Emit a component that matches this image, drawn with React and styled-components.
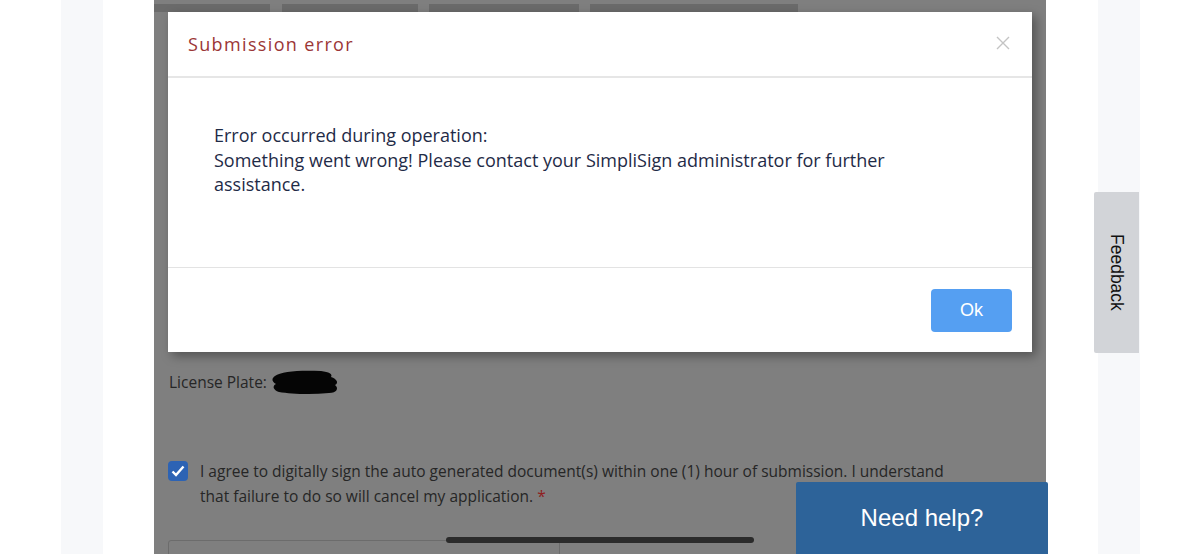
import styled, { createGlobalStyle } from "styled-components";

const Global = createGlobalStyle`
  html, body {
    margin: 0;
    padding: 0;
    height: 554px;
    overflow: hidden;
    background: #ffffff;
  }
  #root {
    height: 554px;
  }
`;

const Page = styled.div`
  position: relative;
  display: flex;
  height: 554px;
  width: 1200px;
  background: #ffffff;
  font-family: "Open Sans", "Liberation Sans", sans-serif;
`;

const Gutter = styled.div`
  width: ${(p) => p.w}px;
  flex: none;
  background: ${(p) => (p.tint ? "#f7f8fa" : "#ffffff")};
`;

const Column = styled.div`
  width: 892px;
  flex: none;
  background: #7f7f7f;
  display: flex;
  flex-direction: column;
  overflow: hidden;
  & > * {
    flex: none;
  }
`;

const TabRow = styled.div`
  display: flex;
  padding-top: 4px;
  height: 8px;
`;

const Tab = styled.div`
  width: ${(p) => p.w}px;
  margin-right: ${(p) => p.gap || 0}px;
  background: #6b6b6b;
`;

const Modal = styled.div`
  margin: 0 14px;
  height: 340px;
  background: #ffffff;
  display: flex;
  flex-direction: column;
  box-shadow: 4px 4px 10px rgba(0, 0, 0, 0.35);
`;

const ModalHeader = styled.div`
  box-sizing: border-box;
  height: 66px;
  display: flex;
  align-items: center;
  justify-content: space-between;
  padding: 0 22px 0 20px;
  border-bottom: 2px solid #e6e6e6;
`;

const Title = styled.h4`
  margin: 0;
  font-size: 18px;
  font-weight: 400;
  letter-spacing: 1.35px;
  color: #9b3636;
`;

const Close = styled.button`
  border: 0;
  background: none;
  padding: 0;
  width: 14px;
  height: 14px;
  display: flex;
  margin-top: -2px;
`;

const ModalBody = styled.div`
  box-sizing: border-box;
  height: 190px;
  padding: 45px 90px 0 46px;
  border-bottom: 1px solid #e3e3e3;
  font-size: 18px;
  line-height: 24.5px;
  color: #1f2b47;
`;

const ModalFooter = styled.div`
  flex: 1;
  display: flex;
  align-items: flex-start;
  justify-content: flex-end;
  padding: 21px 20px 0;
`;

const OkButton = styled.button`
  width: 81px;
  height: 43px;
  border: 0;
  border-radius: 4px;
  background: #559ff2;
  color: #ffffff;
  font-family: "Liberation Sans", Arial, sans-serif;
  font-size: 18px;
`;

const FormArea = styled.div`
  padding: 18px 14px 0 14px;
  color: #262626;
`;

const PlateRow = styled.div`
  display: flex;
  align-items: center;
  height: 24px;
  font-size: 15.5px;
  padding-left: 1px;
  gap: 4px;
`;

const AgreeRow = styled.div`
  display: flex;
  gap: 12px;
  margin-top: 65px;
  font-size: 15.5px;
  line-height: 25px;
  & > span:last-child {
    max-width: 752px;
  }
`;

const Check = styled.span`
  flex: none;
  width: 20px;
  height: 20px;
  margin-top: 2px;
  border-radius: 4px;
  background: #2d63b4;
  display: flex;
  align-items: center;
  justify-content: center;
`;

const Required = styled.span`
  color: #8f2020;
`;

const InputBox = styled.div`
  margin-top: 31px;
  width: 390px;
  height: 30px;
  border: 1px solid #6c6c6c;
  border-radius: 3px 0 0 0;
`;

const HomeBar = styled.div`
  position: absolute;
  left: 446px;
  top: 537px;
  width: 308px;
  height: 6px;
  border-radius: 3px;
  background: #2b2b2b;
`;

const HelpButton = styled.button`
  position: absolute;
  left: 796px;
  top: 482px;
  width: 252px;
  height: 72px;
  border: 0;
  border-radius: 2px 2px 0 0;
  background: #2d6399;
  color: #ffffff;
  font-family: "Liberation Sans", Arial, sans-serif;
  font-size: 24px;
  padding: 0;
`;

const FeedbackTab = styled.div`
  position: absolute;
  left: 1094px;
  top: 192px;
  width: 45px;
  height: 161px;
  border-radius: 2px 0 0 2px;
  background: #d2d4d8;
  display: flex;
  align-items: center;
  justify-content: center;
  writing-mode: vertical-rl;
  font-family: "Liberation Sans", Arial, sans-serif;
  font-size: 17.5px;
  color: #111111;
`;

export default function App() {
  return (
    <>
      <Global />
      <Page>
        <Gutter w={61} />
        <Gutter w={42} tint />
        <Gutter w={51} />
        <Column>
          <TabRow>
            <Tab w={116} gap={12} />
            <Tab w={136} gap={11} />
            <Tab w={150} gap={11} />
            <Tab w={208} />
          </TabRow>
          <Modal>
            <ModalHeader>
              <Title>Submission error</Title>
              <Close aria-label="Close">
                <svg width="14" height="14" viewBox="0 0 14 14">
                  <path d="M1 1L13 13M13 1L1 13" stroke="#c4c4c4" strokeWidth="1.4" />
                </svg>
              </Close>
            </ModalHeader>
            <ModalBody>
              Error occurred during operation:
              <br />
              Something went wrong! Please contact your SimpliSign administrator for further assistance.
            </ModalBody>
            <ModalFooter>
              <OkButton>Ok</OkButton>
            </ModalFooter>
          </Modal>
          <FormArea>
            <PlateRow>
              License Plate:
              <svg width="70" height="28" viewBox="0 0 70 28">
                <path
                  d="M4 8C10 3 30 2 50 3C58 4 62 6 60 9C66 11 68 15 64 17C68 20 66 25 58 25C40 27 20 26 8 24C2 22 1 18 5 16C0 13 1 10 4 8Z"
                  fill="#050505"
                />
              </svg>
            </PlateRow>
            <AgreeRow>
              <Check>
                <svg width="14" height="12" viewBox="0 0 14 12">
                  <path d="M1.5 6.5L5 10L12.5 1.5" fill="none" stroke="#ffffff" strokeWidth="2.4" />
                </svg>
              </Check>
              <span>
                I agree to digitally sign the auto generated document(s) within one (1) hour of submission. I understand that failure to do so will cancel my application. <Required>*</Required>
              </span>
            </AgreeRow>
            <InputBox />
          </FormArea>
        </Column>
        <Gutter w={52} />
        <Gutter w={42} tint />
        <Gutter w={60} />
        <HomeBar />
        <HelpButton>Need help?</HelpButton>
        <FeedbackTab>Feedback</FeedbackTab>
      </Page>
    </>
  );
}
